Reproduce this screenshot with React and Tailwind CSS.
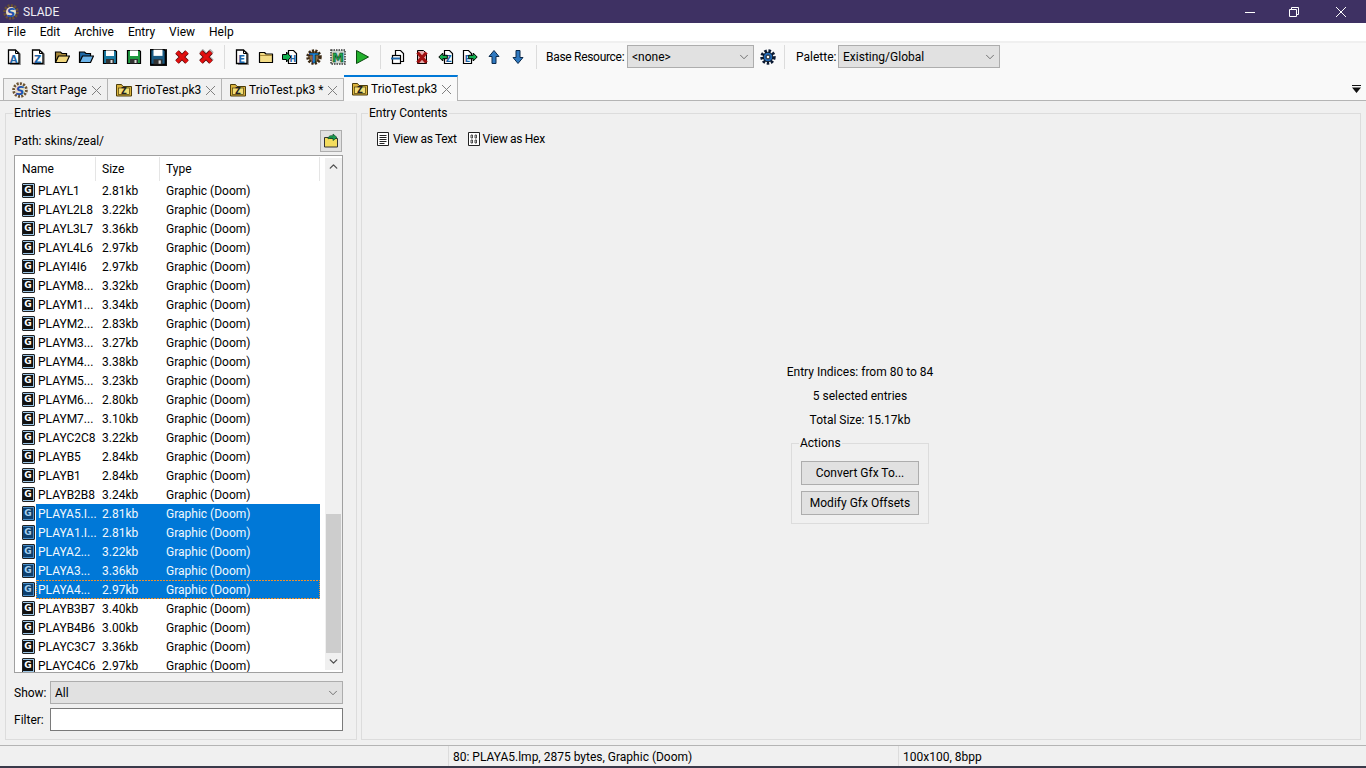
import React from "react";
import { ChevronDown, ChevronUp } from "lucide-react";

const rows = [
  ["PLAYL1", "2.81kb"], ["PLAYL2L8", "3.22kb"], ["PLAYL3L7", "3.36kb"], ["PLAYL4L6", "2.97kb"],
  ["PLAYI4I6", "2.97kb"], ["PLAYM8...", "3.32kb"], ["PLAYM1...", "3.34kb"], ["PLAYM2...", "2.83kb"],
  ["PLAYM3...", "3.27kb"], ["PLAYM4...", "3.38kb"], ["PLAYM5...", "3.23kb"], ["PLAYM6...", "2.80kb"],
  ["PLAYM7...", "3.10kb"], ["PLAYC2C8", "3.22kb"], ["PLAYB5", "2.84kb"], ["PLAYB1", "2.84kb"],
  ["PLAYB2B8", "3.24kb"], ["PLAYA5.I...", "2.81kb", 1], ["PLAYA1.I...", "2.81kb", 1], ["PLAYA2...", "3.22kb", 1],
  ["PLAYA3...", "3.36kb", 1], ["PLAYA4...", "2.97kb", 2], ["PLAYB3B7", "3.40kb"], ["PLAYB4B6", "3.00kb"],
  ["PLAYC3C7", "3.36kb"], ["PLAYC4C6", "2.97kb"],
];

const iconFont = "DejaVu Sans, sans-serif";

// small 16x16 toolbar drawings
function Svg({ children, size = 16 }) {
  return (
    <svg width={size} height={size} viewBox="0 0 16 16" className="shrink-0">
      {children}
    </svg>
  );
}

function Doc({ letter, color = "#1f66a8" }) {
  return (
    <Svg>
      <path d="M4 16V2h8l3 3v11z" fill="#9a9a9a" />
      <path d="M2.500 14.500V1h7l3.500 3.500v10z" fill="#fff" stroke="#000" strokeWidth="1.300" />
      <path d="M9.500 1v3.500H13" fill="none" stroke="#000" />
      <text x="7.600" y="13.500" textAnchor="middle" fontSize="10" fontWeight="700" fontFamily={iconFont} fill={color}>{letter}</text>
    </Svg>
  );
}

function OpenFolder({ fill = "#f1d77e", back = "#a8893a" }) {
  return (
    <Svg>
      <path d="M1.500 13.500V3h5l1.500 1.500h4.500V7" fill={back} stroke="#000" strokeWidth="1.200" />
      <path d="M1.500 13.500L4.500 7h11l-3 6.500z" fill={fill} stroke="#000" strokeWidth="1.200" strokeLinejoin="round" />
    </Svg>
  );
}

function Floppy({ color, big }) {
  return (
    <Svg size={big ? 18 : 16}>
      {big && <rect x="1" y="1" width="15" height="15" fill="#111" />}
      <path d="M1.500 1.500h12l1 1v12h-13z" fill={color} stroke="#000" strokeWidth="1.200" />
      <rect x="4" y="1.500" width="8" height="5.500" fill="#fff" />
      <rect x="4" y="10" width="8" height="4.500" fill="#333" />
      <rect x="8.500" y="11" width="2" height="3" fill="#ddd" />
    </Svg>
  );
}

function RedX({ faded }) {
  return (
    <Svg>
      {faded && <path d="M3 1.500l11 11M14 1.500L3 12.500" stroke="#b0b0b0" strokeWidth="5" />}
      <path d="M3 3l10 10M13 3L3 13" stroke="#5a0a0a" strokeWidth="5" />
      <path d="M3 3l10 10M13 3L3 13" stroke="#e01010" strokeWidth="3.400" />
    </Svg>
  );
}

function PlainFolder() {
  return (
    <Svg>
      <path d="M1.500 13.500V3.500h5l1.500 1.500h6.500v8.500z" fill="#f3dc86" stroke="#000" strokeWidth="1.200" strokeLinejoin="round" />
      <path d="M2 6.500h12" stroke="#a8893a" />
    </Svg>
  );
}

function ImportDoc() {
  return (
    <Svg>
      <path d="M6.500 14.500V1.500h5l3 3v10z" fill="#fff" stroke="#000" strokeWidth="1.200" />
      <text x="10.800" y="12.500" textAnchor="middle" fontSize="8" fontWeight="700" fontFamily={iconFont} fill="#1f66a8">H</text>
      <path d="M.5 5.500h4V3l4.500 5-4.500 5v-2.500h-4z" fill="#12b050" stroke="#000" />
    </Svg>
  );
}

function Cog({ letter, color }) {
  return (
    <Svg>
      <circle cx="8" cy="8" r="6" fill="#8a6a40" stroke="#3b2a15" strokeWidth="3.500" strokeDasharray="2 1.200" />
      <text x="8" y="13.500" textAnchor="middle" fontSize="14" fontWeight="700" fontFamily={iconFont} fill={color} stroke="#000" strokeWidth="0.400">{letter}</text>
    </Svg>
  );
}

function Chip() {
  return (
    <Svg>
      <rect x="1" y="1" width="14" height="14" fill="#cfd8d2" stroke="#3a3a3a" strokeWidth="1.500" strokeDasharray="1.500 1" />
      <text x="8" y="13" textAnchor="middle" fontSize="12" fontWeight="700" fontFamily={iconFont} fill="#1fa84a" stroke="#06301a" strokeWidth="0.500">M</text>
    </Svg>
  );
}

function Play() {
  return (
    <Svg>
      <path d="M2.500 1.500l12 6.500-12 6.500z" fill="#22b02c" stroke="#0b4a10" />
    </Svg>
  );
}

function CloneDoc() {
  return (
    <Svg>
      <path d="M5.500 12.500V1.500h5l3 3v8z" fill="#fff" stroke="#000" strokeWidth="1.200" />
      <rect x="2.500" y="6.500" width="8" height="8" fill="#fff" stroke="#000" strokeWidth="1.200" />
      <path d="M1 9.500h9" stroke="#1f66a8" strokeWidth="2" />
    </Svg>
  );
}

function DelDoc() {
  return (
    <Svg>
      <path d="M3.500 14.500V1.500h6l3 3v10z" fill="#e6b0b0" stroke="#000" />
      <path d="M3.500 3.500l9 10M12.500 3.500l-9 10" stroke="#a01010" strokeWidth="3.200" />
    </Svg>
  );
}

function MoveDoc({ dir }) {
  const left = dir === "left";
  return (
    <Svg>
      <path d={left ? "M6.500 14.500V1.500h5l3 3v10z" : "M1.500 14.500V1.500h5l3 3v10z"} fill="#fff" stroke="#000" strokeWidth="1.200" />
      <text x={left ? "10.600" : "5.600"} y="12.500" textAnchor="middle" fontSize="8" fontWeight="700" fontFamily={iconFont} fill="#1f66a8">{left ? "Z" : "E"}</text>
      <path d={left ? "M.8 8l4-4v2.300h4.500v3.400H4.800V12z" : "M15.200 8l-4-4v2.300H6.700v3.400h4.500V12z"} fill="#12b050" stroke="#000" />
    </Svg>
  );
}

function Arrow({ up }) {
  return (
    <Svg>
      <path d={up ? "M8 1.500l5 6h-3v7H6v-7H3z" : "M8 14.500l5-6h-3v-7H6v7H3z"} fill="#2f79c0" stroke="#0c2b4d" strokeLinejoin="round" />
    </Svg>
  );
}

function BlueGear() {
  return (
    <Svg>
      <circle cx="8" cy="8" r="6" fill="none" stroke="#0c1a33" strokeWidth="3.400" strokeDasharray="2.400 1.600" />
      <circle cx="8" cy="8" r="4.800" fill="#2669b3" stroke="#000" strokeWidth="0.800" />
      <circle cx="8" cy="8" r="1.900" fill="#fff" stroke="#000" strokeWidth="0.800" />
    </Svg>
  );
}

function ZipIcon() {
  return (
    <Svg>
      <path d="M.5 14V2.500h5L7 4.500h8.500V14z" fill="#d9b23c" stroke="#4c3d0c" />
      <rect x="2.500" y="6" width="11" height="6.500" fill="#f3df78" stroke="#4c3d0c" strokeWidth="0.700" />
      <text x="8" y="12" textAnchor="middle" fontSize="8" fontWeight="700" fontFamily={iconFont} fill="#222">Z</text>
    </Svg>
  );
}

function SladeLogo({ size = 16 }) {
  return (
    <Svg size={size}>
      <circle cx="8" cy="8" r="6.300" fill="none" stroke="#6b5232" strokeWidth="3" strokeDasharray="2 1.200" />
      <circle cx="8" cy="8" r="5" fill="#e8dfc8" />
      <text x="8" y="12.500" textAnchor="middle" fontSize="12" fontWeight="700" fontStyle="italic" fontFamily={iconFont} fill="#2050b0">S</text>
    </Svg>
  );
}

function GfxIcon({ selected }) {
  return (
    <div className={`flex h-[15px] w-[13px] shrink-0 rounded-[1px] border border-[#222] pt-[1px] ${selected ? "bg-[#4a8fc9]" : "bg-[#9cc6e6]"}`}>
      <span className={`flex h-[11px] w-[10px] items-center justify-center font-['DejaVu_Sans',sans-serif] text-[9px] leading-none font-bold ${selected ? "bg-[#0d3f6e] text-[#a8d0ee]" : "bg-[#111] text-white"}`}>G</span>
    </div>
  );
}

function ToolBtn({ children }) {
  return <div className="flex h-[24px] w-[24px] items-center justify-center">{children}</div>;
}

function Sep() {
  return (
    <div className="flex w-[12px] justify-center">
      <div className="h-[24px] w-px bg-[#dcdcdc]" />
    </div>
  );
}

function Combo({ label, className }) {
  return (
    <div className={`flex items-center justify-between border border-[#adadad] bg-[#e1e1e1] pl-[4px] pr-[2px] ${className}`}>
      <span>{label}</span>
      <ChevronDown size={14} strokeWidth={1.2} className="text-[#444]" />
    </div>
  );
}

function Tab({ icon, label, active, className }) {
  return (
    <div
      className={`flex items-center gap-[3px] border-r border-[#b4b4b4] pl-[8px] pr-[5px] ${
        active
          ? "relative z-10 -mb-px h-[26px] border-t-2 border-t-[#0078d7] bg-[#f9f9f9]"
          : "h-[22px] border-t bg-[#f0f0f0] pt-[1px]"
      } ${className}`}
    >
      {icon}
      <span className="whitespace-nowrap">{label}</span>
      <svg width="11" height="11" viewBox="0 0 11 11" className="ml-auto shrink-0 text-[#808080]">
        <path d="M1 1l9 9M10 1l-9 9" stroke="currentColor" />
      </svg>
    </div>
  );
}

function Row({ name, size, state }) {
  const selected = !!state;
  return (
    <div className="flex h-[19px] shrink-0 items-center pl-[7px]">
      <GfxIcon selected={selected} />
      <div
        className={`ml-[1px] flex h-[19px] w-[284px] items-center ${selected ? "bg-[#0078d7] text-[#f2f8fd]" : ""} ${
          state === 2
            ? "border-x border-dotted border-[#f0902c] bg-[linear-gradient(90deg,#f0902c_67%,transparent_67%),linear-gradient(90deg,#f0902c_67%,transparent_67%)] bg-[length:3px_1px] bg-[position:0_0,0_100%] bg-repeat-x pl-[1px]"
            : "pl-[2px]"
        }`}
      >
        <span className="w-[64px] overflow-hidden whitespace-nowrap">{name}</span>
        <span className="w-[64px]">{size}</span>
        <span>Graphic (Doom)</span>
      </div>
    </div>
  );
}

export default function App() {
  return (
    <div className="flex h-[768px] w-[1366px] flex-col overflow-hidden bg-[#f0f0f0] font-['Roboto',sans-serif] text-[12px] leading-[16px] text-black">
      {/* Title bar */}
      <div className="flex h-[23px] shrink-0 items-center bg-[#3e3163] pl-[3px] text-[#f0eef5]">
        <SladeLogo />
        <span className="ml-[4px]">SLADE</span>
        <div className="ml-auto flex items-center pr-[19px]">
          <svg width="10" height="10" viewBox="0 0 10 10" className="mr-[34px]"><path d="M0 5.500h10" stroke="#fff" /></svg>
          <svg width="10" height="10" viewBox="0 0 10 10" className="mr-[36px]"><path d="M.5 2.500h7v7h-7zM2.500 2.500v-2h7v7h-2" fill="none" stroke="#fff" /></svg>
          <svg width="12" height="12" viewBox="0 0 12 12"><path d="M1 1l10 10M11 1L1 11" stroke="#fff" /></svg>
        </div>
      </div>

      {/* Menu */}
      <div className="flex h-[18px] shrink-0 items-center gap-[14px] bg-white pl-[7px]">
        <span>File</span>
        <span>Edit</span>
        <span>Archive</span>
        <span>Entry</span>
        <span>View</span>
        <span>Help</span>
      </div>

      {/* Toolbar */}
      <div className="flex h-[33px] shrink-0 items-center border-t-2 border-[#f0f0f0] bg-[#f9f9f9] pb-[4px] pl-[2px]">
        <ToolBtn><Doc letter="A" /></ToolBtn>
        <ToolBtn><Doc letter="Z" /></ToolBtn>
        <ToolBtn><OpenFolder /></ToolBtn>
        <ToolBtn><OpenFolder fill="#6cb4ea" back="#1f6aa8" /></ToolBtn>
        <ToolBtn><Floppy color="#1b7ba3" /></ToolBtn>
        <ToolBtn><Floppy color="#1f9a40" /></ToolBtn>
        <ToolBtn><Floppy color="#1b5c85" big /></ToolBtn>
        <ToolBtn><RedX /></ToolBtn>
        <ToolBtn><RedX faded /></ToolBtn>
        <Sep />
        <ToolBtn><Doc letter="E" /></ToolBtn>
        <ToolBtn><PlainFolder /></ToolBtn>
        <ToolBtn><ImportDoc /></ToolBtn>
        <ToolBtn><Cog letter="T" color="#1f86d8" /></ToolBtn>
        <ToolBtn><Chip /></ToolBtn>
        <ToolBtn><Play /></ToolBtn>
        <Sep />
        <ToolBtn><CloneDoc /></ToolBtn>
        <ToolBtn><DelDoc /></ToolBtn>
        <ToolBtn><MoveDoc dir="left" /></ToolBtn>
        <ToolBtn><MoveDoc dir="right" /></ToolBtn>
        <ToolBtn><Arrow up /></ToolBtn>
        <ToolBtn><Arrow /></ToolBtn>
        <Sep />
        <span className="ml-[4px] w-[78px] whitespace-nowrap tracking-[-0.3px]">Base Resource:</span>
        <Combo label="<none>" className="ml-[3px] h-[23px] w-[127px]" />
        <div className="ml-[6px]"><BlueGear /></div>
        <div className="ml-[2px]"><Sep /></div>
        <span className="ml-[6px] w-[39px]">Palette:</span>
        <Combo label="Existing/Global" className="ml-[3px] h-[23px] w-[162px]" />
      </div>

      {/* Tabs */}
      <div className="flex h-[26px] shrink-0 items-end bg-[#f9f9f9] pl-[3px]">
        <Tab icon={<SladeLogo />} label="Start Page" className="w-[105px] border-l" />
        <Tab icon={<ZipIcon />} label="TrioTest.pk3" className="w-[114px]" />
        <Tab icon={<ZipIcon />} label="TrioTest.pk3 *" className="w-[122px]" />
        <Tab icon={<ZipIcon />} label="TrioTest.pk3" active className="w-[114px]" />
        <svg width="9" height="8" viewBox="0 0 9 8" className="mb-[7px] ml-auto mr-[5px]">
          <path d="M0 0h9v1H0zM0 2.500h9L4.500 8z" fill="#111" />
        </svg>
      </div>

      {/* Main panels */}
      <div className="flex min-h-0 flex-1 gap-[4px] border-t border-[#b4b4b4] px-[5px] pb-[5px] pt-[4px]">
        <fieldset className="flex w-[352px] shrink-0 flex-col border border-[#dcdcdc] px-[8px]">
          <legend className="ml-[-1px] px-[1px] leading-[16px]">Entries</legend>
          <div className="mt-[8px] flex h-[24px] w-[328px] items-center justify-between">
            <span>Path: skins/zeal/</span>
            <div className="flex h-[22px] w-[22px] items-center justify-center border border-[#adadad] bg-[#e1e1e1]">
              <Svg>
                <path d="M1.500 14V4.500h4l1 1h8V14z" fill="#f3dc5e" stroke="#333" />
                <path d="M5 6c0-3 3-4 5-3V1l4 3.500-4 3V5.500C8 5 6 5 5 6z" fill="#1c9c50" stroke="#0b4a25" strokeWidth="0.700" />
              </Svg>
            </div>
          </div>

          <div className="mt-[2px] flex h-[518px] w-[329px] overflow-hidden border border-[#a0a0a0] bg-white">
            <div className="flex w-[310px] shrink-0 flex-col overflow-hidden">
              <div className="flex h-[25px] shrink-0 items-center">
                <div className="flex h-[24px] w-[81px] items-center border-r border-[#e5e5e5] pl-[7px]">Name</div>
                <div className="flex h-[24px] w-[64px] items-center border-r border-[#e5e5e5] pl-[6px]">Size</div>
                <div className="flex h-[24px] w-[160px] items-center border-r border-[#e5e5e5] pl-[6px]">Type</div>
              </div>
              {rows.map((r) => (
                <Row key={r[0]} name={r[0]} size={r[1]} state={r[2]} />
              ))}
            </div>
            <div className="my-[2px] flex w-[17px] shrink-0 flex-col items-center bg-[#f0f0f0]">
              <div className="flex h-[17px] items-center justify-center"><ChevronUp size={13} strokeWidth={2.5} className="text-[#505050]" /></div>
              <div className="mt-[339px] w-[15px] flex-1 bg-[#cdcdcd]" />
              <div className="flex h-[17px] items-center justify-center"><ChevronDown size={13} strokeWidth={2.5} className="text-[#505050]" /></div>
            </div>
          </div>

          <div className="mt-[8px] flex h-[23px] items-center">
            <span className="w-[36px]">Show:</span>
            <Combo label="All" className="h-[23px] w-[293px]" />
          </div>
          <div className="mt-[4px] flex h-[23px] items-center">
            <span className="w-[36px]">Filter:</span>
            <div className="h-[23px] w-[293px] border border-[#7a7a7a] bg-white" />
          </div>
        </fieldset>

        <fieldset className="flex min-w-0 flex-1 flex-col border border-[#dcdcdc] px-[15px]">
          <legend className="ml-[-9px] px-[1px] leading-[16px]">Entry Contents</legend>
          <div className="ml-[-2px] mt-[7px] flex h-[22px] items-center">
            <Svg>
              <path d="M2.500 1.500h11v13h-11z" fill="#fff" stroke="#222" />
              <path d="M4.500 4.500h7M4.500 6.500h7M4.500 8.500h7M4.500 10.500h7M4.500 12.500h5" stroke="#222" />
            </Svg>
            <span className="ml-[2px] tracking-[-0.3px]">View as Text</span>
            <span className="ml-[9px] flex items-center">
              <Svg>
                <path d="M2.500 1.500h11v13h-11z" fill="#fff" stroke="#222" />
                <path d="M5 4h1.500v3H5zM9 4h1.500v3H9zM5 9h1.500v3H5zM9 9h1.500v3H9z" fill="none" stroke="#222" strokeWidth="0.800" />
              </Svg>
              <span className="ml-[1px] tracking-[-0.3px]">View as Hex</span>
            </span>
          </div>

          <div className="flex flex-1 flex-col items-center pr-[2px] pt-[210px]">
            <div className="flex h-[24px] items-center">Entry Indices: from 80 to 84</div>
            <div className="flex h-[24px] items-center">5 selected entries</div>
            <div className="flex h-[24px] items-center">Total Size: 15.17kb</div>
            <fieldset className="mt-[3px] w-[138px] border border-[#dcdcdc] px-[9px] pb-[8px]">
              <legend className="ml-[-2px] px-[1px] leading-[16px]">Actions</legend>
              <div className="mt-[10px] flex h-[24px] items-center justify-center border border-[#adadad] bg-[#e1e1e1]">Convert Gfx To...</div>
              <div className="mt-[6px] flex h-[24px] items-center justify-center border border-[#adadad] bg-[#e1e1e1]">Modify Gfx Offsets</div>
            </fieldset>
          </div>
        </fieldset>
      </div>

      {/* Status bar */}
      <div className="flex h-[21px] shrink-0 items-center border-t border-[#b4b4b4]">
        <div className="h-full w-[448px]" />
        <div className="flex h-full w-[450px] items-center border-l border-[#dcdcdc] pl-[4px] pt-[2px]">80: PLAYA5.lmp, 2875 bytes, Graphic (Doom)</div>
        <div className="flex h-full items-center border-l border-[#dcdcdc] pl-[4px] pt-[2px]">100x100, 8bpp</div>
      </div>
      <div className="h-[2px] shrink-0 bg-[#3a3a4a]" />
    </div>
  );
}
